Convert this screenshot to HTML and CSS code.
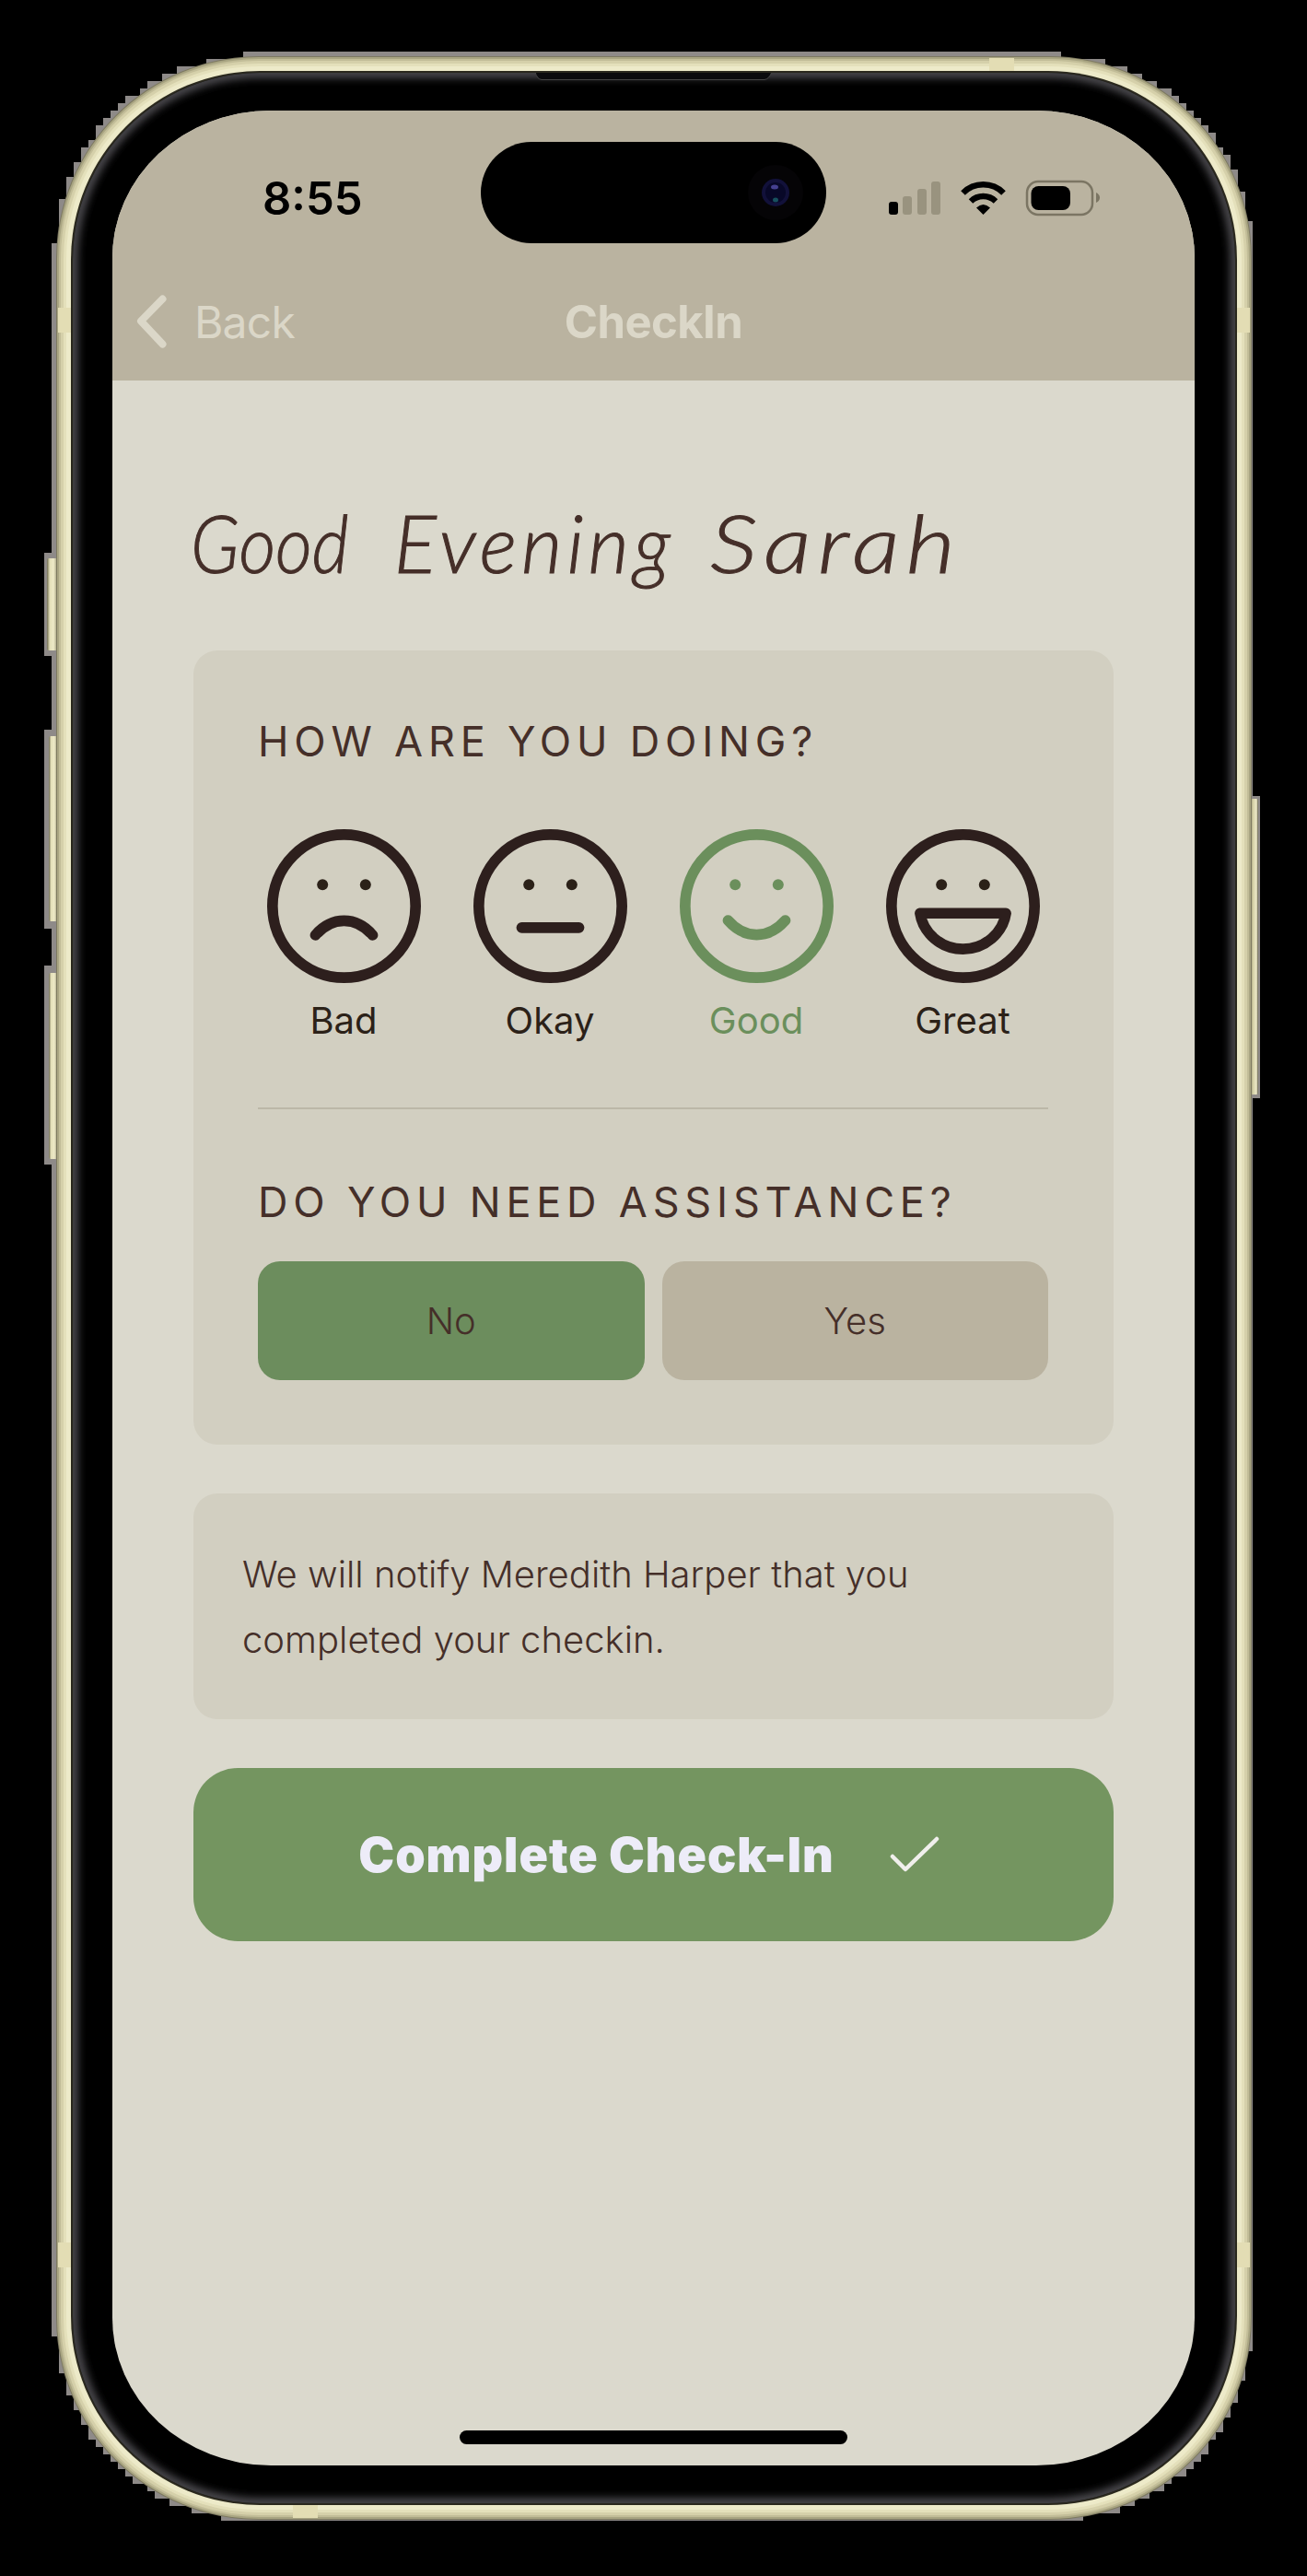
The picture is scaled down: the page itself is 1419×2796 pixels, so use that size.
FILE: index.html
```html
<!DOCTYPE html>
<html lang="en">
<head>
<meta charset="utf-8">
<title>CheckIn</title>
<link rel="stylesheet" href="styles.css">
</head>
<body>
<div class="stage">
  <!-- Phone shell: fringe, side buttons, metal band and bezel -->
  <svg class="shell" viewBox="0 0 1419 2796" aria-hidden="true">
    <defs>
      <linearGradient id="btnL" x1="0" x2="1"><stop offset="0" stop-color="#6f6c52"/><stop offset=".25" stop-color="#e3dfb8"/><stop offset=".6" stop-color="#eeeac8"/><stop offset="1" stop-color="#8b8767"/></linearGradient>
      <linearGradient id="btnR" x1="0" x2="1"><stop offset="0" stop-color="#8b8767"/><stop offset=".4" stop-color="#d6d2a8"/><stop offset=".8" stop-color="#ece8c8"/><stop offset="1" stop-color="#5f5c48"/></linearGradient>
      <filter id="soft" x="-5%" y="-5%" width="110%" height="110%"><feGaussianBlur stdDeviation="5"/></filter>
      <clipPath id="bezel"><rect x="79" y="79" width="1262" height="2638" rx="203"/></clipPath>
    </defs>
    <path class="fringe" d="M264 56H1152V64H1200V72H1224V80H1240V88H1256V96H1272V104H1280V112H1288V120H1296V128H1304V136H1312V144H1320V160H1328V168H1336V184H1344V208H1352V240H1360V864H1368V1192H1360V2552H1352V2584H1344V2608H1336V2624H1328V2640H1320V2648H1312V2664H1304V2672H1296V2680H1288V2688H1272V2696H1264V2704H1248V2712H1232V2720H1216V2728H1176V2736H240V2728H208V2720H184V2712H168V2704H160V2696H144V2688H136V2680H128V2672H120V2664H112V2656H104V2648H96V2632H88V2616H80V2600H72V2576H64V2536H56V1264H48V1048H56V1008H48V792H56V712H48V600H56V264H64V216H72V192H80V176H88V160H96V152H104V136H112V128H120V120H128V112H136V104H152V96H160V88H176V80H192V72H224V64H264Z"/>
    <rect x="51" y="606" width="12" height="100" rx="2" fill="url(#btnL)"/>
    <rect x="53" y="799" width="10" height="201" rx="2" fill="url(#btnL)"/>
    <rect x="53" y="1056" width="10" height="202" rx="2" fill="url(#btnL)"/>
    <rect x="1357" y="867" width="9" height="321" rx="2" fill="url(#btnR)"/>
    <rect x="61" y="61" width="1298" height="2674" rx="220" fill="#7d7960"/>
    <rect x="62" y="62" width="1296" height="2672" rx="219" fill="#a9a582"/>
    <rect x="64" y="64" width="1292" height="2668" rx="217" fill="#c2bd98"/>
    <rect x="66" y="66" width="1288" height="2664" rx="215" fill="#d5d0aa"/>
    <rect x="69" y="69" width="1282" height="2658" rx="212" fill="#e4e0bb"/>
    <rect x="72" y="72" width="1276" height="2652" rx="209" fill="#edeac9"/>
    <g fill="#e3ddb4">
      <path d="M1074 63h27v14h-27zM318 2719h27v14h-27zM63 334h14v27H63zM63 2434h14v27H63zM1343 334h14v27h-14zM1343 2434h14v27h-14z"/>
    </g>
    <rect x="77" y="77" width="1266" height="2642" rx="205" fill="#2a281d"/>
    <g clip-path="url(#bezel)">
      <rect x="79" y="79" width="1262" height="2638" fill="#000"/>
      <rect x="79" y="79" width="1262" height="2638" rx="203" fill="none" stroke="#56555a" stroke-width="10" filter="url(#soft)"/>
      <path d="M581 78q2 8 7 8.500H830q5-.5 8-8.500z" fill="#0b0b0d" stroke="#454545" stroke-width="1"/>
    </g>
  </svg>

  <main class="screen">
    <header class="topbar">
      <div class="statusbar">
        <span class="time">8:55</span>
        <div class="island">
          <svg class="camera" viewBox="0 0 60 60">
            <circle cx="30" cy="30" r="30" fill="#050406"/>
            <circle cx="30" cy="30" r="15" fill="#12113a"/>
            <circle cx="30" cy="30" r="11" fill="#080828"/>
            <ellipse cx="29" cy="24" rx="4" ry="2.500" fill="#454090"/>
            <ellipse cx="30" cy="38" rx="3" ry="2.500" fill="#17505e"/>
          </svg>
        </div>
        <svg class="indicators" viewBox="965 195 230 40">
          <rect x="965" y="219" width="10" height="14" rx="3"/>
          <g fill="#99937f"><rect x="980" y="213" width="10" height="20" rx="3"/><rect x="996" y="205" width="10" height="28" rx="3"/><rect x="1011" y="197" width="10" height="36" rx="3"/></g>
          <g fill="none" stroke="#000" stroke-width="6.500"><path d="M1045.500 209.500a31 31 0 0 1 44 0"/><path d="M1054 218.500a19.500 19.500 0 0 1 27 0"/></g>
          <path d="M1060 225.500q7.500-7 15 0l-7.500 7.500z"/>
          <rect x="1115" y="197" width="71" height="36" rx="12" fill="none" stroke="#7b7563" stroke-width="2.500"/>
          <rect x="1119.500" y="202" width="42.500" height="26" rx="8"/>
          <path d="M1190 209q4 2 4 5.500t-4 5.500z" fill="#7b7563"/>
        </svg>
      </div>
      <nav class="navbar">
        <a class="back"><svg class="chevron" viewBox="0 0 34 58"><path d="M28.500 4.500L5 28.500L28.500 53.500"/></svg><span>Back</span></a>
        <span class="title">CheckIn</span>
      </nav>
    </header>

    <div class="content">
      <h1 class="greeting"><span class="part">Good</span> <span class="daytime">Evening</span> <span class="name">Sarah</span></h1>

      <section class="card survey">
        <h2 class="question">HOW ARE YOU DOING?</h2>
        <div class="moods">
          <div class="mood">
            <svg class="face" viewBox="1.250 1.250 21.500 21.500"><circle cx="12" cy="12" r="10"/><circle class="eye" cx="9" cy="9" r=".77"/><circle class="eye" cx="15" cy="9" r=".77"/><path d="M8 16.050C9 14.900 10.300 14.050 12 14.050S15 14.900 16 16.050"/></svg>
            <span>Bad</span>
          </div>
          <div class="mood">
            <svg class="face" viewBox="1.250 1.250 21.500 21.500"><circle cx="12" cy="12" r="10"/><circle class="eye" cx="9" cy="9" r=".77"/><circle class="eye" cx="15" cy="9" r=".77"/><path d="M8 15h8"/></svg>
            <span>Okay</span>
          </div>
          <div class="mood selected">
            <svg class="face" viewBox="1.250 1.250 21.500 21.500"><circle cx="12" cy="12" r="10"/><circle class="eye" cx="9" cy="9" r=".77"/><circle class="eye" cx="15" cy="9" r=".77"/><path d="M8 14C9 15.150 10.300 16 12 16S15 15.150 16 14"/></svg>
            <span>Good</span>
          </div>
          <div class="mood">
            <svg class="face" viewBox="1.250 1.250 21.500 21.500"><circle cx="12" cy="12" r="10"/><circle class="eye" cx="9" cy="9" r=".77"/><circle class="eye" cx="15" cy="9" r=".77"/><path d="M6 13H18C17.600 15.700 15.100 18 12 18S6.400 15.700 6 13Z"/></svg>
            <span>Great</span>
          </div>
        </div>
        <h2 class="question second">DO YOU NEED ASSISTANCE?</h2>
        <div class="answers">
          <button class="answer chosen">No</button>
          <button class="answer">Yes</button>
        </div>
      </section>

      <p class="card notice">We will notify Meredith Harper that you<br>completed your checkin.</p>

      <button class="submit"><span>Complete Check-In</span><svg class="check" viewBox="0 0 56 42"><path d="M4 23L18 37L52 4"/></svg></button>
    </div>

    <div class="home"></div>
  </main>
</div>
</body>
</html>
```

FILE: styles.css
```css
* { box-sizing: border-box; }

body {
  margin: 0;
  background: #000;
  font-family: Inter, "Liberation Sans", sans-serif;
}

.stage {
  position: relative;
  width: 1419px;
  height: 2796px;
  padding: 120px 122px;
}

.shell {
  position: absolute;
  inset: 0;
  width: 1419px;
  height: 2796px;
}

.fringe { fill: #8e8a88; }

.screen {
  position: relative;
  display: flex;
  flex-direction: column;
  width: 1175px;
  height: 2556px;
  overflow: hidden;
  border-radius: 172px / 160px;
  background: #dbd9cd;
}

.topbar {
  flex: none;
  height: 293px;
  background: #bab3a0;
}

.statusbar {
  display: flex;
  align-items: center;
  height: 178px;
  padding: 34px 102px 34px 163px;
}

.time {
  width: 237px;
  font-size: 49px;
  font-weight: 600;
  line-height: 60px;
  margin-top: 14px;
}

.island {
  display: flex;
  align-items: center;
  justify-content: flex-end;
  width: 375px;
  height: 110px;
  padding-right: 25px;
  border-radius: 55px;
  background: #000;
}

.camera { width: 60px; height: 60px; }

.indicators {
  width: 230px;
  height: 40px;
  margin-left: 68px;
  margin-top: 12px;
}

.navbar {
  display: grid;
  grid-template-columns: 1fr auto 1fr;
  align-items: center;
  height: 102px;
  padding: 0 26px;
  color: #dbd7c8;
  font-size: 48px;
}

.back { display: flex; align-items: center; gap: 29px; }
.chevron {
  width: 34px;
  height: 58px;
  fill: none;
  stroke: currentColor;
  stroke-width: 8;
  stroke-linecap: round;
  stroke-linejoin: round;
}
.back span { letter-spacing: -0.8px; }
.title {
  font-size: 49px;
  font-weight: 700;
  letter-spacing: -0.6px;
}

.content {
  display: flex;
  flex-direction: column;
  padding: 126px 88px 0;
}

.greeting {
  display: flex;
  margin: 0 0 67px -3px;
  color: #452f29;
  font-family: Lato, "Noto Sans", sans-serif;
  font-size: 86px;
  font-style: italic;
  font-weight: 300;
  line-height: 100px;
  letter-spacing: 5px;
  white-space: nowrap;
  -webkit-text-stroke: 1px #452f29;
}
.greeting span { transform-origin: left; }
.part {
  margin-right: 30px;
  letter-spacing: 0;
  transform: scaleX(0.9);
}
.daytime { margin-right: 38px; }
.name {
  letter-spacing: 6px;
  transform: scaleX(1.2);
}

.card {
  margin: 0 0 53px;
  border-radius: 26px;
  background: #d2cfc1;
}

.survey { height: 862px; padding: 69px 71px 0 70px; }

.question {
  margin: 0;
  color: #452f29;
  font-size: 45px;
  font-weight: 400;
  line-height: 60px;
  letter-spacing: 5.8px;
  white-space: nowrap;
}

.moods {
  display: flex;
  justify-content: space-between;
  height: 304px;
  margin-top: 65px;
  border-bottom: 2px solid #bcb8a8;
}

.mood {
  display: flex;
  flex-direction: column;
  align-items: center;
  width: 186px;
  color: #2b2118;
  font-size: 40px;
  line-height: 48px;
}
.mood span { margin-top: 17px; }

.face {
  width: 167px;
  height: 167px;
  fill: none;
  stroke: #2d1f1d;
  stroke-width: 1.5;
  stroke-linecap: round;
  stroke-linejoin: round;
}
.eye { fill: #2b2118; stroke: none; }

.selected { color: #6b8f5c; }
.selected .face { stroke: #6b8f5c; }
.selected .eye { fill: #6b8f5c; }

.second { margin-top: 71px; }

.answers { display: flex; gap: 19px; margin-top: 34px; }

.answer {
  flex: 1;
  height: 129px;
  border: 0;
  border-radius: 24px;
  background: #bab3a0;
  color: #452f29;
  font: 300 40px Inter, "Liberation Sans", sans-serif;
}
.chosen { background: #6c8d5d; }

.notice {
  height: 245px;
  padding: 53px;
  color: #452f29;
  font-size: 40px;
  font-weight: 300;
  line-height: 70.5px;
  white-space: nowrap;
}

.submit {
  display: flex;
  align-items: center;
  justify-content: center;
  gap: 59px;
  height: 188px;
  padding: 0 9px 0 0;
  border: 0;
  border-radius: 48px;
  background: #749560;
  color: #edecf8;
  font: 900 52px Inter, "Liberation Sans", sans-serif;
  letter-spacing: 0.95px;
}

.check {
  width: 56px;
  height: 42px;
  fill: none;
  stroke: #f0efec;
  stroke-width: 4.5;
  stroke-linecap: round;
  stroke-linejoin: round;
}

.home {
  width: 421px;
  height: 15px;
  margin: auto auto 23px;
  border-radius: 8px;
  background: #000;
}
```
